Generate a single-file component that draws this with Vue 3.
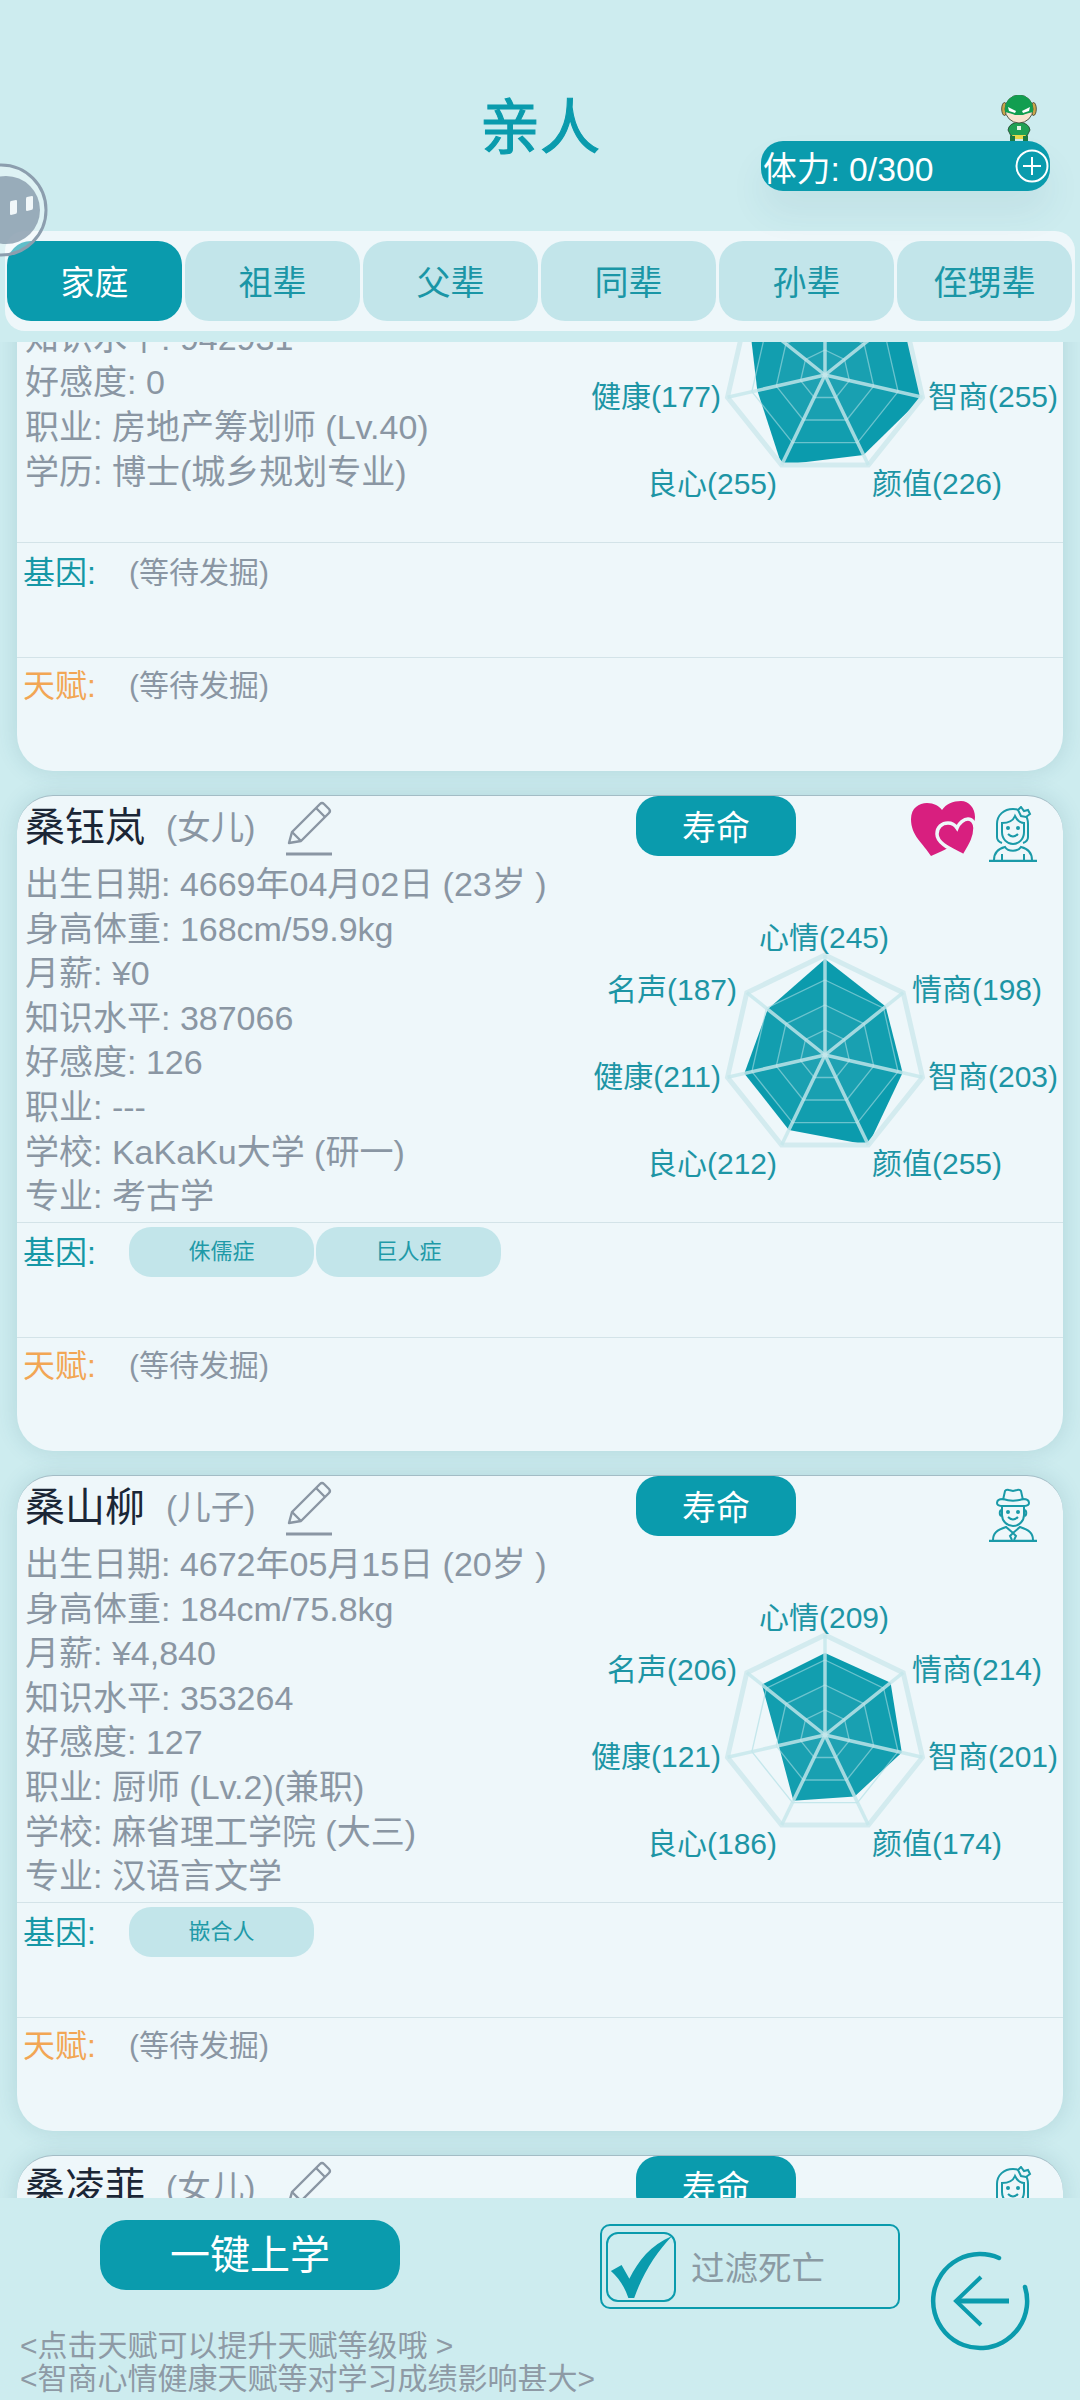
<template>
  <div class="page">
    <header class="head">
      <h1 class="title">亲人</h1>
      <div class="stamina">
        <svg class="hero" viewBox="0 0 40 46">
          <ellipse cx="4.5" cy="14" rx="2.8" ry="6.5" fill="#c9a64a" stroke="#3a3a2a" stroke-width="0.8" />
          <ellipse cx="33.5" cy="14" rx="2.8" ry="6.5" fill="#c9a64a" stroke="#3a3a2a" stroke-width="0.8" />
          <path d="M8 35q1-7 11-8 10 1 11 8l-3 6H11z" fill="#1fa055" stroke="#20402a" stroke-width="0.8" />
          <rect x="17" y="31" width="4" height="4" fill="#dff3e4" />
          <path d="M12 40h14l-2 4H14z" fill="#e8d94a" />
          <rect x="10" y="41" width="5" height="5" fill="#1c7a42" />
          <rect x="23" y="41" width="5" height="5" fill="#1c7a42" />
          <circle cx="19" cy="14" r="14" fill="#f8e3cf" stroke="#2b3a2b" stroke-width="0.8" />
          <path d="M5 14a14 14 0 0 1 28 0v3c-4 1-8 2-10 3h-8c-2-1-6-2-10-3z" fill="#119e50" />
          <path d="M8 12l8 4-1 2-6-2zM30 12l-8 4 1 2 6-2z" fill="#fff" />
        </svg>
        <span>体力: 0/300</span>
        <svg class="plus" viewBox="0 0 34 34">
          <circle cx="17" cy="17" r="15.5" fill="none" stroke="#fff" stroke-width="2" />
          <path d="M17 8v18M8 17h18" stroke="#fff" stroke-width="2" fill="none" />
        </svg>
      </div>
    </header>

    <nav class="tabs">
      <div v-for="(t, i) in tabs" :key="t" class="tab" :class="{ active: i === 0 }">{{ t }}</div>
    </nav>

    <svg class="float" viewBox="0 0 50 96">
      <circle cx="1" cy="47" r="45" fill="rgba(255,255,255,.35)" stroke="#8c9eae" stroke-width="3" />
      <circle cx="6" cy="47" r="34" fill="#8ea2b2" fill-opacity=".88" />
      <path d="M11 38l5-1q1 0 1 1v11q0 2-2 2l-4 1q-1 0-1-1V40q0-2 1-2z" fill="#f1f7f9" />
      <path d="M27 34l5-1q1 0 1 1v11q0 2-2 2l-4 1q-1 0-1-1V36q0-2 1-2z" fill="#f1f7f9" />
    </svg>

    <main class="list">
      <section v-for="p in people" :key="p.name" class="card">
        <div class="card-head">
          <div class="who">
            <span class="name">{{ p.name }}</span>
            <span class="rel">({{ p.rel }})</span>
            <svg class="pencil" viewBox="0 0 48 56" fill="none" stroke="#8a96a3" stroke-width="2.4">
              <path d="M4 43l3-11L35 4q2-2 4 0l5 5q2 2 0 4L16 41z" stroke-linejoin="round" />
              <path d="M7 32l9 9M31 8l9 9" />
              <path d="M1 54h46" stroke-width="3" />
            </svg>
          </div>
          <div class="life">寿命</div>
          <div class="marks">
            <svg v-if="p.love" class="hearts" viewBox="0 0 64 56">
              <path d="M20 55C12 42 0 35 0 18 0 7 8 2 16 2c7 0 12 3 15 7 4-6 11-9 19-9 8 0 14 7 14 16 0 14-19 29-44 39z" fill="#d81f7f" />
              <path d="M53 55C45 50 26 44 26 33c0-7 5-11 11-11 4 0 7 2 9 5 2-5 7-9 11-9 4 0 7 4 7 9 0 11-6 19-11 28z" fill="#d81f7f" stroke="#eef7fa" stroke-width="3.5" />
            </svg>
            <svg class="avatar" viewBox="0 0 48 56" fill="none" stroke="#1a9aa8" stroke-width="2">
              <template v-if="p.girl">
                <path d="M13 37c-3-1-5-3-5-6V18C8 9 15 3 24 3s15 6 15 15v13c0 3-2 5-5 6" />
                <path d="M13 17c6 0 11-2 13-7 2 4 5 7 9 7v9c0 7-5 12-11 12s-11-5-11-12z" />
                <path d="M29 4l3-3 3 4 4-1 2 4-4 3-5-1z" fill="#eef7fa" />
                <path d="M19 28q5 5 10 0" />
                <circle cx="19" cy="22" r="1" fill="#1a9aa8" />
                <circle cx="29" cy="22" r="1" fill="#1a9aa8" />
                <path d="M5 54c0-7 3-11 11-13 3 5 13 5 16 0 8 2 11 6 11 13M13 54v-6M35 54v-6" />
                <path d="M0 55h48" stroke-width="2.6" />
              </template>
              <template v-else>
                <path d="M14 14l2-9q1-2 4-1l4 1 4-1q3-1 4 1l2 9" />
                <path d="M8 17c0-3 3-4 6-4 6 2 14 2 20 0 3 0 6 1 6 4s-3 3-6 3H14c-3 0-6 0-6-3z" />
                <path d="M13 20v9c0 6 5 11 11 11s11-5 11-11v-9M13 24c-3 0-3 6 0 6M35 24c3 0 3 6 0 6" />
                <path d="M19 31q5 5 10 0" />
                <circle cx="19" cy="26" r="1" fill="#1a9aa8" />
                <circle cx="29" cy="26" r="1" fill="#1a9aa8" />
                <path d="M4 54c0-7 4-10 13-13l7 6 7-6c9 3 13 6 13 13M24 47l-3 3 2 4M24 47l3 3-2 4" />
                <path d="M0 55h48" stroke-width="2.6" />
              </template>
            </svg>
          </div>
        </div>

        <div class="card-body">
          <div class="info">
            <div v-for="line in p.lines" :key="line" class="line">{{ line }}</div>
          </div>
          <svg class="radar" viewBox="0 0 480 360">
            <polygon :points="shape(p.stats)" class="value" />
            <polygon v-for="lv in [0.75, 0.5, 0.25]" :key="lv" :points="ring(lv)" class="ring-in" />
            <polygon :points="ring(1)" class="ring-out" />
            <line v-for="(s, i) in spokes" :key="i" :x1="cx" :y1="cy" :x2="s.x" :y2="s.y" class="spoke" />
            <text
              v-for="(l, i) in labels"
              :key="l.name"
              :x="l.x"
              :y="l.y"
              :text-anchor="l.anchor"
              dominant-baseline="central"
              class="label"
            >{{ l.name }}({{ p.stats[i] }})</text>
          </svg>
        </div>

        <div class="row first">
          <span class="tag gene">基因:</span>
          <div v-if="p.genes.length" class="chips">
            <span v-for="g in p.genes" :key="g" class="chip">{{ g }}</span>
          </div>
          <span v-else class="wait">(等待发掘)</span>
        </div>
        <div class="row">
          <span class="tag talent">天赋:</span>
          <span class="wait">(等待发掘)</span>
        </div>
      </section>
    </main>

    <footer class="foot">
      <button class="go">一键上学</button>
      <div class="filter">
        <div class="box">
          <svg viewBox="0 0 68 68"><path d="M3 38l11-6 8 14C31 28 44 11 66 2 50 19 36 40 27 66h-6C17 54 11 45 3 38z" fill="#0a9bad" /></svg>
        </div>
        <span>过滤死亡</span>
      </div>
      <svg class="back" viewBox="0 0 100 100" fill="none" stroke="#0a9bad" stroke-width="4.5">
        <path d="M95 36A47 47 0 1 1 69 7" stroke-linecap="round" />
        <path d="M28 50h51" stroke-width="5" />
        <path d="M51 26L26 50l25 24" stroke-width="4" />
      </svg>
      <div class="notes">
        <div>&lt;点击天赋可以提升天赋等级哦 &gt;</div>
        <div>&lt;智商心情健康天赋等对学习成绩影响甚大&gt;</div>
      </div>
    </footer>
  </div>
</template>

<script setup>
const tabs = ['家庭', '祖辈', '父辈', '同辈', '孙辈', '侄甥辈']

const people = [
  {
    name: '桑建国',
    rel: '丈夫',
    love: false,
    girl: false,
    genes: [],
    stats: [240, 250, 255, 226, 255, 177, 250],
    lines: [
      '出生日期: 4643年02月11日 (49岁 )',
      '身高体重: 178cm/70.2kg',
      '月薪: ¥12,000',
      '知识水平: 942931',
      '好感度: 0',
      '职业: 房地产筹划师 (Lv.40)',
      '学历: 博士(城乡规划专业)',
    ],
  },
  {
    name: '桑钰岚',
    rel: '女儿',
    love: true,
    girl: true,
    genes: ['侏儒症', '巨人症'],
    stats: [245, 198, 203, 255, 212, 211, 187],
    lines: [
      '出生日期: 4669年04月02日 (23岁 )',
      '身高体重: 168cm/59.9kg',
      '月薪: ¥0',
      '知识水平: 387066',
      '好感度: 126',
      '职业: ---',
      '学校: KaKaKu大学 (研一)',
      '专业: 考古学',
    ],
  },
  {
    name: '桑山柳',
    rel: '儿子',
    love: false,
    girl: false,
    genes: ['嵌合人'],
    stats: [209, 214, 201, 174, 186, 121, 206],
    lines: [
      '出生日期: 4672年05月15日 (20岁 )',
      '身高体重: 184cm/75.8kg',
      '月薪: ¥4,840',
      '知识水平: 353264',
      '好感度: 127',
      '职业: 厨师 (Lv.2)(兼职)',
      '学校: 麻省理工学院 (大三)',
      '专业: 汉语言文学',
    ],
  },
  {
    name: '桑凌菲',
    rel: '女儿',
    love: false,
    girl: true,
    genes: [],
    stats: [200, 200, 200, 200, 200, 200, 200],
    lines: ['出生日期: 4675年03月09日 (17岁 )'],
  },
]

// radar geometry, in the svg's own units
const cx = 242
const cy = 193
const radius = 100

function point(i, k) {
  const a = (i * 2 * Math.PI) / 7 - Math.PI / 2
  return { x: cx + Math.cos(a) * radius * k, y: cy + Math.sin(a) * radius * k }
}

function ring(k) {
  return [0, 1, 2, 3, 4, 5, 6].map((i) => {
    const p = point(i, k)
    return `${p.x.toFixed(1)},${p.y.toFixed(1)}`
  }).join(' ')
}

function shape(stats) {
  return stats.map((v, i) => {
    const p = point(i, v / 255)
    return `${p.x.toFixed(1)},${p.y.toFixed(1)}`
  }).join(' ')
}

const spokes = [0, 1, 2, 3, 4, 5, 6].map((i) => point(i, 1))

const labels = [
  { name: '心情', x: 241, y: 75, anchor: 'middle' },
  { name: '情商', x: 329, y: 127, anchor: 'start' },
  { name: '智商', x: 345, y: 214, anchor: 'start' },
  { name: '颜值', x: 289, y: 301, anchor: 'start' },
  { name: '良心', x: 194, y: 301, anchor: 'end' },
  { name: '健康', x: 138, y: 214, anchor: 'end' },
  { name: '名声', x: 154, y: 127, anchor: 'end' },
]
</script>

<style>
html,
body {
  margin: 0;
  background: #cdecef;
}
</style>

<style scoped>
.page {
  position: relative;
  width: 1080px;
  height: 2400px;
  overflow: hidden;
  background: #cdecef;
  font-family: "Liberation Sans", "Noto Sans CJK SC", sans-serif;
  display: flex;
  flex-direction: column;
}

.head {
  height: 231px;
  display: grid;
  grid-template-columns: 1fr auto 1fr;
  align-items: start;
}
.title {
  grid-column: 2;
  margin: 93px 0 0;
  font-size: 60px;
  line-height: 72px;
  font-weight: 400;
  -webkit-text-stroke: 1.1px #0a9bad;
  color: #0a9bad;
}
.stamina {
  grid-column: 3;
  justify-self: end;
  position: relative;
  margin: 141px 30px 0 0;
  width: 289px;
  height: 50px;
  box-sizing: border-box;
  padding-left: 2px;
  display: flex;
  align-items: center;
  justify-content: space-between;
  background: #0a9bad;
  border-radius: 22px;
  box-shadow: 0 22px 36px rgba(40, 90, 110, 0.07);
  color: #fff;
  font-size: 33.7px;
}
.plus {
  width: 34px;
  height: 34px;
  margin-right: 1px;
}
.hero {
  position: absolute;
  left: 239px;
  top: -46px;
  width: 40px;
  height: 46px;
}

.tabs {
  height: 100px;
  margin: 0 5px;
  padding: 10px 2px;
  box-sizing: border-box;
  display: grid;
  grid-template-columns: repeat(6, 175px);
  column-gap: 3px;
  background: #eef7fa;
  border-radius: 20px;
}
.tab {
  display: flex;
  align-items: center;
  justify-content: center;
  padding-bottom: 2px;
  box-sizing: border-box;
  border-radius: 24px;
  background: #c2e5ea;
  color: #1a96a6;
  font-size: 34px;
}
.tab.active {
  background: #0a9bad;
  color: #fff;
}

.float {
  position: absolute;
  left: 0;
  top: 163px;
  width: 50px;
  height: 96px;
  z-index: 5;
}

.list {
  height: 1856px;
  margin-top: 11px;
  padding: 0 17px;
  overflow: hidden;
  display: flex;
  flex-direction: column;
  gap: 24px;
  flex: none;
}
.card {
  flex: none;
  height: 656px;
  box-sizing: border-box;
  background: #eef7fa;
  border-top: 1px solid #a3bcc5;
  border-radius: 36px;
  box-shadow: 0 0 22px rgba(30, 90, 110, 0.15);
}
.card:first-child {
  margin-top: -227px;
}
.card-head {
  height: 66px;
  display: grid;
  grid-template-columns: 611px 160px 1fr;
  padding-left: 8px;
}
.who {
  display: flex;
  align-items: center;
  height: 56px;
}
.name {
  font-size: 40px;
  color: #1b2636;
}
.rel {
  margin-left: 21px;
  font-size: 33.5px;
  color: #8a96a3;
}
.pencil {
  width: 48px;
  height: 56px;
  margin: 8px 0 0 30px;
}
.life {
  height: 60px;
  display: flex;
  align-items: center;
  justify-content: center;
  padding-bottom: 2px;
  box-sizing: border-box;
  background: #0a9bad;
  border-radius: 22px;
  color: #fff;
  font-size: 34px;
}
.marks {
  display: flex;
  justify-content: flex-end;
  align-items: flex-start;
  gap: 14px;
  padding: 10px 26px 0 0;
}
.hearts {
  width: 64px;
  height: 56px;
  margin-top: -5px;
}
.avatar {
  width: 48px;
  height: 56px;
}

.card-body {
  height: 360px;
  display: flex;
  border-bottom: 1px solid #d3e3e8;
  box-sizing: content-box;
}
.info {
  width: 558px;
  padding-left: 8px;
  flex: none;
}
.line {
  font-size: 34px;
  line-height: 44.6px;
  color: #8a96a3;
  white-space: nowrap;
}
.radar {
  width: 480px;
  height: 360px;
  flex: none;
}
.value {
  fill: #0b9bad;
}
.ring-in {
  fill: rgba(255, 255, 255, 0.05);
  stroke: #a9dde3;
  stroke-width: 1.3;
  opacity: 0.6;
}
.ring-out {
  fill: none;
  stroke: #d3ebef;
  stroke-width: 5;
}
.spoke {
  stroke: #c6e8ec;
  stroke-width: 3.5;
  opacity: 0.8;
}
.label {
  font-size: 30px;
  fill: #1d95a5;
}

.row {
  height: 114px;
  box-sizing: border-box;
  padding: 3px 0 0 6px;
  display: flex;
  align-items: flex-start;
  line-height: 50px;
}
.row.first {
  padding-top: 5px;
}
.row + .row {
  border-top: 1px solid #d3e3e8;
}
.tag {
  width: 106px;
  flex: none;
  font-size: 32px;
}
.gene {
  color: #1597a6;
}
.talent {
  color: #f2a654;
}
.wait {
  font-size: 30px;
  color: #8a96a3;
}
.chips {
  display: flex;
  gap: 2px;
  margin-top: -1px;
}
.chip {
  width: 185px;
  height: 50px;
  display: flex;
  align-items: center;
  justify-content: center;
  border-radius: 22px;
  background: #c2e5ea;
  color: #1f9aa8;
  font-size: 22px;
}

.foot {
  position: relative;
  z-index: 2;
  flex: 1;
  background: #cdecef;
  display: grid;
  grid-template-columns: 600px 300px 1fr;
  grid-template-rows: 131px 1fr;
}
.go {
  margin: 22px 0 0 100px;
  width: 300px;
  height: 70px;
  padding: 0 0 6px;
  border: 0;
  border-radius: 26px;
  background: #0a9bad;
  color: #fff;
  font: inherit;
  font-size: 40px;
}
.filter {
  margin-top: 26px;
  height: 85px;
  box-sizing: border-box;
  border: 2px solid #0a9bad;
  border-radius: 10px;
  padding: 0 0 0 4px;
  display: flex;
  align-items: center;
  gap: 15px;
  color: #8a9aa3;
  font-size: 33.5px;
}
.filter span {
  margin-top: -2px;
}
.box {
  width: 70px;
  height: 70px;
  box-sizing: border-box;
  border: 2px solid #0a9bad;
  border-radius: 12px;
}
.box svg {
  display: block;
  width: 66px;
  height: 66px;
}
.back {
  grid-column: 3;
  grid-row: 1 / 3;
  width: 100px;
  height: 100px;
  margin: 53px 0 0 30px;
}
.notes {
  grid-column: 1 / 3;
  grid-row: 2;
  padding-left: 20px;
  color: #8e9aa5;
  font-size: 30px;
  line-height: 33px;
}
</style>
